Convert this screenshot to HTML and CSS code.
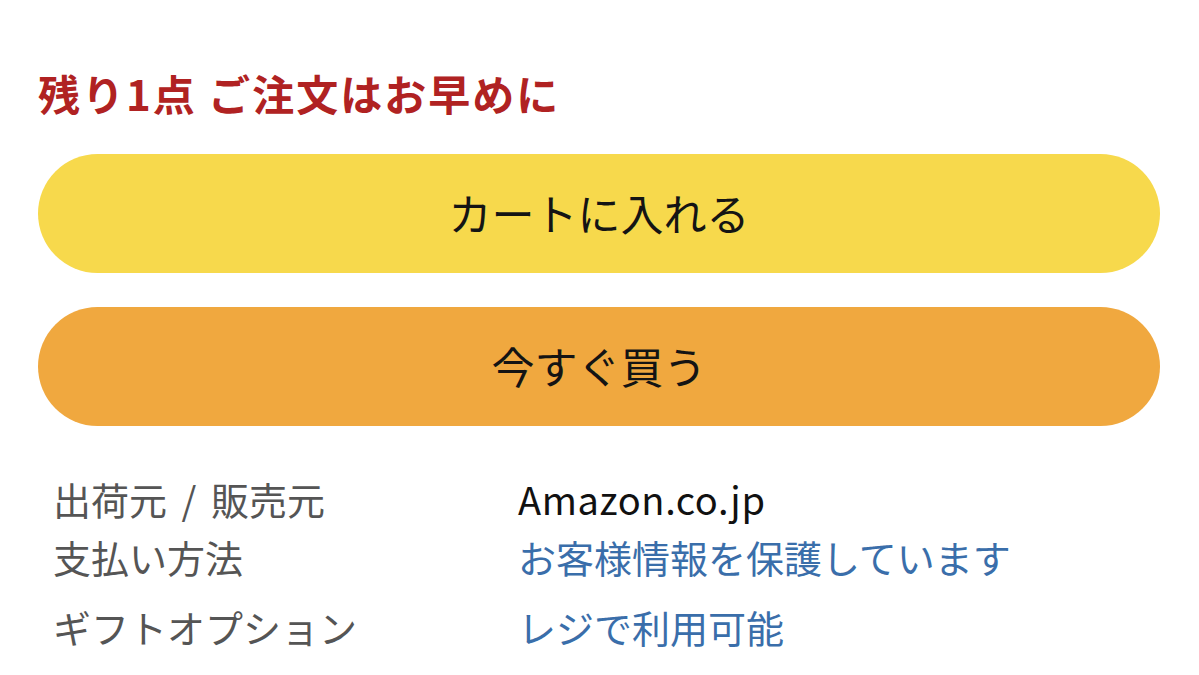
FILE: index.html
```html
<!DOCTYPE html>
<html lang="ja">
<head>
<meta charset="utf-8">
<title>購入</title>
<link rel="stylesheet" href="styles.css">
</head>
<body>
<main class="buybox">
  <p class="stock">残り1点 ご注文はお早めに</p>
  <div class="actions">
    <button class="btn btn-cart" type="button">カートに入れる</button>
    <button class="btn btn-buy" type="button">今すぐ買う</button>
  </div>
  <dl class="details">
    <div class="row">
      <dt>出荷元 <span class="sep">/</span> 販売元</dt>
      <dd class="plain">Amazon.co.jp</dd>
    </div>
    <div class="row">
      <dt>支払い方法</dt>
      <dd><a href="#">お客様情報を保護しています</a></dd>
    </div>
    <div class="row row-gift">
      <dt>ギフトオプション</dt>
      <dd><a href="#">レジで利用可能</a></dd>
    </div>
  </dl>
</main>
</body>
</html>
```
FILE: styles.css
```css
html, body {
  margin: 0;
  padding: 0;
  background: #ffffff;
}

body {
  font-family: "Noto Sans CJK JP", "Noto Sans", sans-serif;
  color: #111111;
}

.buybox {
  padding: 68px 39px 0 38px;
}

.stock {
  margin: 0;
  font-size: 42px;
  line-height: 50px;
  font-weight: 700;
  letter-spacing: 2px;
  color: #b02222;
}

.actions {
  display: flex;
  flex-direction: column;
  gap: 34px;
  margin-top: 36px;
}

.btn {
  display: flex;
  align-items: center;
  justify-content: center;
  height: 119px;
  border: none;
  border-radius: 60px;
  font-family: inherit;
  font-size: 43px;
  color: #141414;
  padding: 0 0 3px;
}

.btn-cart {
  background: #f7d94c;
}

.btn-buy {
  background: #f0a83f;
}

.details {
  margin: 44px 0 0 0;
  padding-left: 15px;
}

.row {
  display: grid;
  grid-template-columns: 465px 1fr;
  font-size: 38px;
  line-height: 58px;
}

.row-gift {
  margin-top: 12px;
}

.row dt {
  color: #555555;
}

.row dt .sep {
  margin: 0 6px;
}

.row dd {
  margin: 0;
}

.row dd.plain {
  color: #111111;
  letter-spacing: 0.6px;
}

.row dd a {
  color: #3a6eaa;
  text-decoration: none;
}
```
